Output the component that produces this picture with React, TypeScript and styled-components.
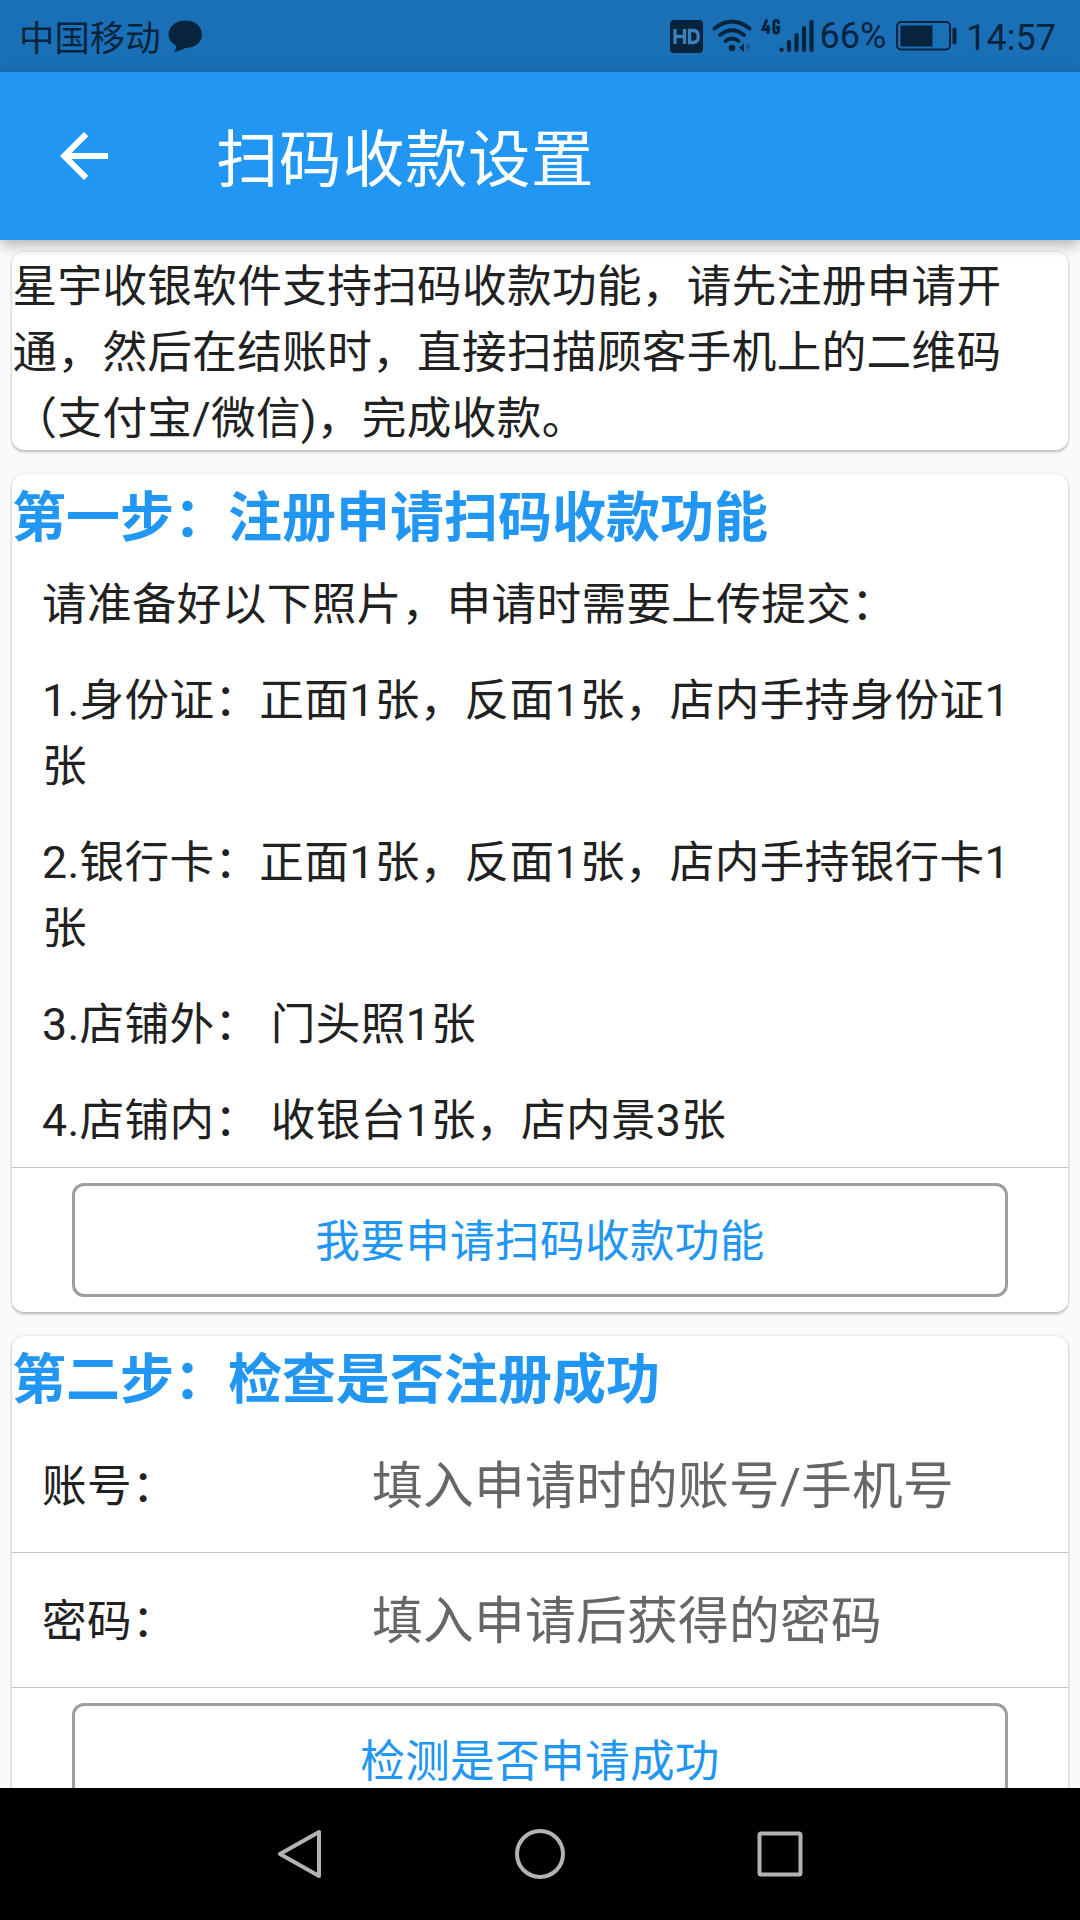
import React from 'react';
import styled, { createGlobalStyle } from 'styled-components';

const BLUE = '#2196f3';
const INK = '#07243c';

const GlobalStyle = createGlobalStyle`
  *, *::before, *::after { box-sizing: border-box; }
  body {
    margin: 0;
    background: #fafafa;
    font-family: Roboto, "Noto Sans CJK SC", sans-serif;
    text-spacing-trim: space-all;
  }
`;

const Screen = styled.div`
  width: 1080px;
  height: 1920px;
  display: flex;
  flex-direction: column;
  overflow: hidden;
  background: #fafafa;
  color: #212121;
`;

const StatusBar = styled.div`
  flex: none;
  height: 72px;
  padding: 0 24px 0 19px;
  display: flex;
  align-items: center;
  justify-content: space-between;
  background: #1a70b7;
  color: ${INK};
`;

const Cluster = styled.div`
  display: flex;
  align-items: center;
  height: 72px;
`;

const Carrier = styled.span`
  font-size: 35.4px;
  line-height: 72px;
  margin-right: 7px;
  padding-top: 5px;
`;

const StatusText = styled.span<{ $gap: number; $drop?: number }>`
  font-size: 36px;
  line-height: 40px;
  margin-left: ${p => p.$gap}px;
  padding-top: ${p => p.$drop ?? 0}px;
`;

const Icon = styled.svg<{ $gap?: number }>`
  flex: none;
  display: block;
  margin-left: ${p => p.$gap ?? 0}px;
`;

const AppBar = styled.header`
  flex: none;
  height: 168px;
  padding-left: 48px;
  display: flex;
  align-items: center;
  background: ${BLUE};
  color: #fff;
  z-index: 1;
  box-shadow: 0 4px 14px rgba(0, 0, 0, 0.32);
`;

const Title = styled.h1`
  margin: 0 0 0 96px;
  padding-top: 9px;
  font-size: 62.5px;
  font-weight: 400;
  line-height: 80px;
  letter-spacing: 0.5px;
`;

const Content = styled.main`
  flex: 1;
  min-height: 0;
  overflow: hidden;
  padding: 12px;
  display: flex;
  flex-direction: column;
  gap: 24px;
`;

const Card = styled.section`
  flex: none;
  background: #fff;
  border-radius: 12px;
  box-shadow: 0 2px 3px rgba(0, 0, 0, 0.24), 0 0 3px rgba(0, 0, 0, 0.12);
`;

const Text = styled.p`
  margin: 0;
  font-size: 44.6px;
  line-height: 66px;
  letter-spacing: 0.36px;
`;

const Intro = styled(Text)`
  height: 198px;
  padding: 2px 30px 0 0.5px;
`;

const Heading = styled.h2`
  margin: 0;
  height: 81px;
  padding-top: 6px;
  font-size: 54px;
  font-weight: 700;
  line-height: 78px;
  color: ${BLUE};
`;

const Item = styled(Text)`
  padding: 17px 30px 13px;
`;

const Divider = styled.div`
  height: 1px;
  background: #c8c8c8;
`;

const Action = styled.div`
  padding: 14.5px 60px 15.5px;
  display: flex;
`;

const OutlineButton = styled.button`
  flex: 1;
  height: 114px;
  padding: 5px 0 0;
  border: 3px solid #9e9e9e;
  border-radius: 12px;
  background: #fff;
  color: ${BLUE};
  font-family: inherit;
  font-size: 44.6px;
  letter-spacing: 0.36px;
  line-height: 66px;
`;

const Field = styled.label`
  height: 134.5px;
  padding: 5px 0 0 30px;
  display: grid;
  grid-template-columns: 330px 1fr;
  align-items: center;
`;

const Hint = styled.span`
  font-size: 50.7px;
  line-height: 66px;
  letter-spacing: 0.3px;
  color: #666;
`;

const NavBar = styled.nav`
  flex: none;
  height: 132px;
  display: flex;
  align-items: center;
  justify-content: center;
  gap: 188px;
  background: #000;
`;

const items = [
  '请准备好以下照片，申请时需要上传提交：',
  '1.身份证：正面1张，反面1张，店内手持身份证1张',
  '2.银行卡：正面1张，反面1张，店内手持银行卡1张',
  '3.店铺外： 门头照1张',
  '4.店铺内： 收银台1张，店内景3张',
];

const fields = [
  { label: '账号：', hint: '填入申请时的账号/手机号' },
  { label: '密码：', hint: '填入申请后获得的密码' },
];

const ChatIcon = () => (
  <Icon width="35" height="33" viewBox="0 0 35 33">
    <path d="M17.500 0.500C27 0.500 34 6.500 34 14.500S27 28 17.500 28C14 29.500 10 31.800 6 32C7.500 30 8.500 28 8 25.500C3 23 0.500 19 0.500 14.500C0.500 6.500 8 0.500 17.500 0.500Z" fill={INK} />
  </Icon>
);

const HdIcon = () => (
  <Icon width="33" height="33" viewBox="0 0 33 33">
    <rect width="33" height="33" rx="4" fill={INK} />
    <path d="M5 9V24M14.500 9V24M5 16.500H14.500M19.500 10.500H23Q28.300 10.500 28.300 16.500T23 22.500H19.500Z" fill="none" stroke="#3a80ba" strokeWidth="3.300" />
  </Icon>
);

const WifiIcon = () => (
  <Icon $gap={9} width="40" height="34" viewBox="0 0 40 34">
    <g fill="none" stroke={INK} strokeWidth="3.800" strokeLinecap="round">
      <path d="M2.500 9.500Q20 -4.500 37.500 9.500" />
      <path d="M8 16Q20 6.500 32 16" />
      <path d="M13.500 22Q20 17 26.500 22" />
    </g>
    <circle cx="20" cy="29" r="3.300" fill={INK} />
    <path d="M32 24.500V33L27 28.800Z" fill={INK} />
    <path d="M34 24V31.500L38.500 27.700Z" fill="#17558c" />
  </Icon>
);

const SignalIcon = () => (
  <Icon $gap={9} width="53" height="34" viewBox="0 0 53 34">
    <g fill="none" stroke={INK} strokeWidth="3">
      <path d="M6 0.500L1.700 10.500H9M7 6V15" />
      <path d="M17.500 5V4Q17.500 1.500 15.200 1.500T12.900 4V11.500Q12.900 14 15.200 14T17.500 11.500V8.500H15" />
    </g>
    <g stroke={INK} strokeWidth="4.200" strokeLinecap="round">
      <path d="M20.500 30.500V31M28 23V31M35.500 16V31M43 9V31M50.500 3V31" />
    </g>
  </Icon>
);

const BatteryIcon = () => (
  <Icon $gap={10} width="62" height="30" viewBox="0 0 62 30">
    <rect x="1" y="1" width="53" height="27.500" rx="4" fill="none" stroke={INK} strokeWidth="2" />
    <rect x="4.500" y="4.500" width="32" height="21" fill={INK} />
    <rect x="56.500" y="6.500" width="4" height="17" rx="2" fill={INK} />
  </Icon>
);

export default function App() {
  return (
    <Screen>
      <GlobalStyle />
      <StatusBar>
        <Cluster>
          <Carrier>中国移动</Carrier>
          <ChatIcon />
        </Cluster>
        <Cluster>
          <HdIcon />
          <WifiIcon />
          <SignalIcon />
          <StatusText $gap={6}>66%</StatusText>
          <BatteryIcon />
          <StatusText $gap={8} $drop={4}>14:57</StatusText>
        </Cluster>
      </StatusBar>
      <AppBar>
        <Icon width="72" height="72" viewBox="0 0 24 24">
          <path d="M20 11H7.830l5.590-5.590L12 4l-8 8 8 8 1.410-1.410L7.830 13H20v-2z" fill="#fff" />
        </Icon>
        <Title>扫码收款设置</Title>
      </AppBar>
      <Content>
        <Card>
          <Intro>星宇收银软件支持扫码收款功能，请先注册申请开通，然后在结账时，直接扫描顾客手机上的二维码（支付宝/微信)，完成收款。</Intro>
        </Card>
        <Card>
          <Heading>第一步：注册申请扫码收款功能</Heading>
          {items.map(text => <Item key={text}>{text}</Item>)}
          <Divider />
          <Action><OutlineButton>我要申请扫码收款功能</OutlineButton></Action>
        </Card>
        <Card>
          <Heading>第二步：检查是否注册成功</Heading>
          {fields.map(f => (
            <React.Fragment key={f.label}>
              <Field>
                <Text as="span">{f.label}</Text>
                <Hint>{f.hint}</Hint>
              </Field>
              <Divider />
            </React.Fragment>
          ))}
          <Action><OutlineButton>检测是否申请成功</OutlineButton></Action>
        </Card>
      </Content>
      <NavBar>
        <Icon width="52" height="52" viewBox="0 0 52 52">
          <path d="M45 4V48L6 26Z" fill="none" stroke="#b3b3b3" strokeWidth="4" strokeLinejoin="round" />
        </Icon>
        <Icon width="52" height="52" viewBox="0 0 52 52">
          <circle cx="26" cy="26" r="23" fill="none" stroke="#b3b3b3" strokeWidth="4" />
        </Icon>
        <Icon width="52" height="52" viewBox="0 0 52 52">
          <rect x="5.500" y="5.500" width="41" height="41" rx="1.500" fill="none" stroke="#b3b3b3" strokeWidth="4" />
        </Icon>
      </NavBar>
    </Screen>
  );
}
